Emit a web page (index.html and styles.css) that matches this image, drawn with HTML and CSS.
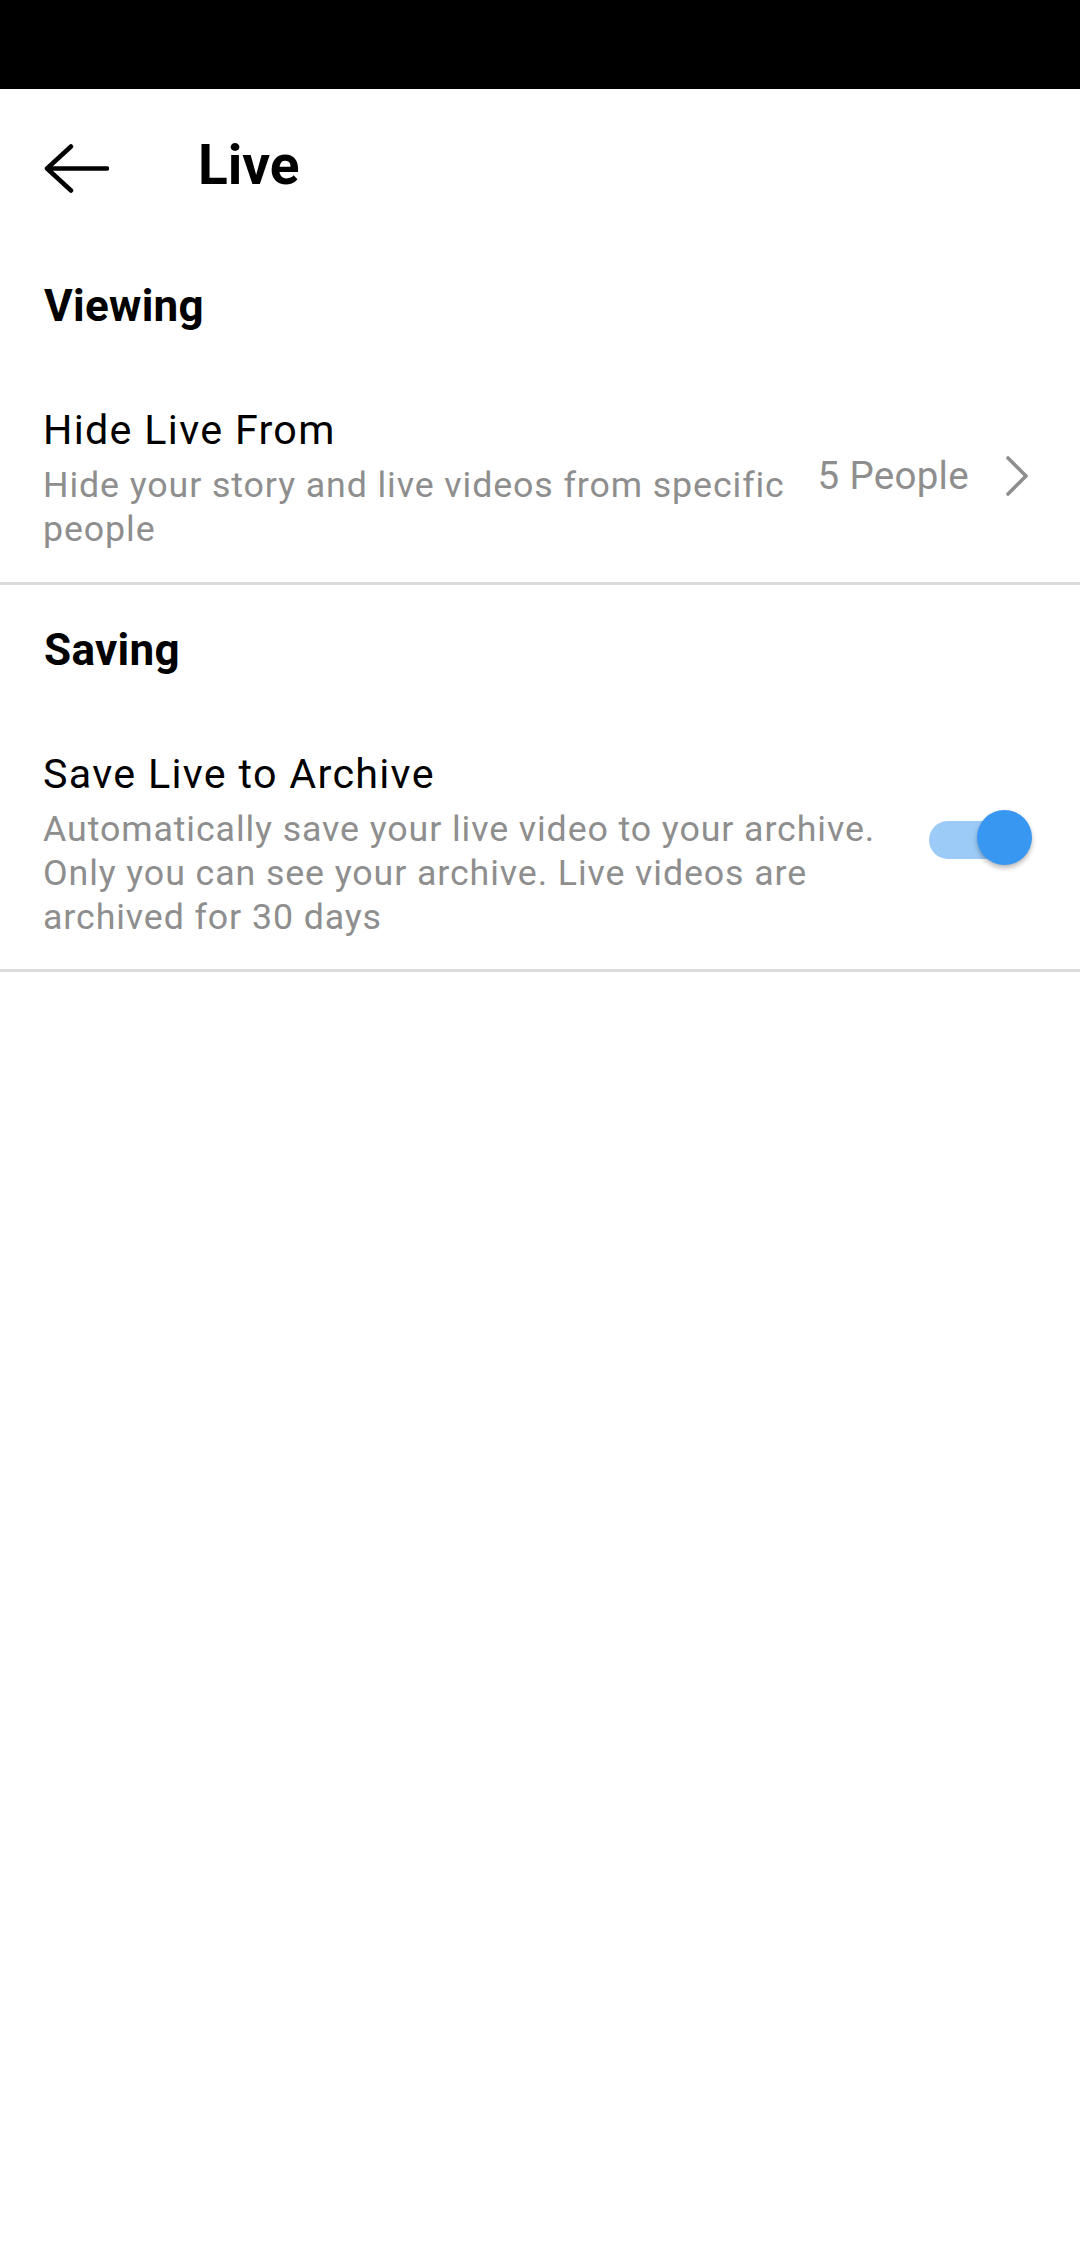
FILE: index.html
```html
<!DOCTYPE html>
<html lang="en">
<head>
<meta charset="utf-8">
<title>Live</title>
<link rel="stylesheet" href="styles.css">
</head>
<body>
<div class="status-bar"></div>
<header class="header">
  <svg class="back" width="65" height="49" viewBox="0 0 65 49" aria-hidden="true">
    <path d="M3 24.5 H63 M27 2.5 L3 24.5 L27 46.5" fill="none" stroke="#000" stroke-width="4.5" stroke-linecap="round" stroke-linejoin="round"/>
  </svg>
  <h1 class="title">Live</h1>
</header>

<section class="section">
  <h2 class="section-title">Viewing</h2>
  <div class="row">
    <div class="row-text">
      <div class="row-title">Hide Live From</div>
      <div class="row-sub">Hide your story and live videos from specific people</div>
    </div>
    <div class="row-right">
      <span class="row-value">5 People</span>
      <svg class="chevron" width="26" height="42" viewBox="0 0 26 42" aria-hidden="true">
        <path d="M4 3 L22 21 L4 39" fill="none" stroke="#8e8e8e" stroke-width="3.6" stroke-linecap="round" stroke-linejoin="round"/>
      </svg>
    </div>
  </div>
</section>

<section class="section section-saving">
  <h2 class="section-title">Saving</h2>
  <div class="row">
    <div class="row-text">
      <div class="row-title">Save Live to Archive</div>
      <div class="row-sub">Automatically save your live video to your archive. Only you can see your archive. Live videos are archived for 30 days</div>
    </div>
    <div class="switch">
      <div class="switch-track"></div>
      <div class="switch-knob"></div>
    </div>
  </div>
</section>
</body>
</html>
```

FILE: styles.css
```css
html, body {
  margin: 0;
  padding: 0;
  background: #fff;
}

body {
  width: 1080px;
  min-height: 2246px;
  font-family: Roboto, "Noto Sans", "Liberation Sans", sans-serif;
  color: #000;
}

.status-bar {
  height: 89px;
  background: #000;
}

.header {
  height: 151px;
  display: flex;
  align-items: center;
  padding-left: 44px;
  box-sizing: border-box;
}

.back {
  display: block;
  margin-top: 7px;
  flex: none;
}

.title {
  margin: 0 0 0 89px;
  font-size: 55px;
  line-height: 66px;
  font-weight: 700;
}

.section {
  border-bottom: 3px solid #dbdbdb;
}

.section-title {
  margin: 0;
  padding: 44px 44px 0;
  font-size: 44px;
  line-height: 44px;
  font-weight: 700;
  letter-spacing: 0.3px;
}

.section-saving .section-title {
  padding-top: 43px;
}

.row {
  display: flex;
  align-items: center;
  padding: 76px 48px 31px 43px;
}

.section-saving .row {
  padding-bottom: 30px;
}

.row-text {
  flex: 1;
  min-width: 0;
}

.row-title {
  font-size: 41.25px;
  line-height: 52px;
  letter-spacing: 1.3px;
  color: #000;
}

.row-sub {
  margin-top: 7px;
  font-size: 35.75px;
  line-height: 44px;
  letter-spacing: 0.9px;
  color: #8e8e8e;
}

.row-right {
  flex: none;
  display: flex;
  align-items: center;
  margin-left: 28px;
  margin-top: -3px;
}

.row-value {
  font-size: 38.5px;
  line-height: 44px;
  letter-spacing: 0.3px;
  color: #8e8e8e;
}

.chevron {
  display: block;
  margin-left: 35px;
  margin-right: 2px;
}

.switch {
  flex: none;
  position: relative;
  width: 103px;
  height: 55px;
  margin-left: 30px;
  margin-bottom: 8px;
}

.switch-track {
  position: absolute;
  left: 0;
  top: 9px;
  width: 94px;
  height: 38px;
  border-radius: 19px;
  background: #9ccbf7;
}

.switch-knob {
  position: absolute;
  right: 0;
  top: -2px;
  width: 55px;
  height: 55px;
  border-radius: 50%;
  background: #3897f0;
  box-shadow: 0 3px 5px rgba(0, 0, 0, 0.28);
}
```
